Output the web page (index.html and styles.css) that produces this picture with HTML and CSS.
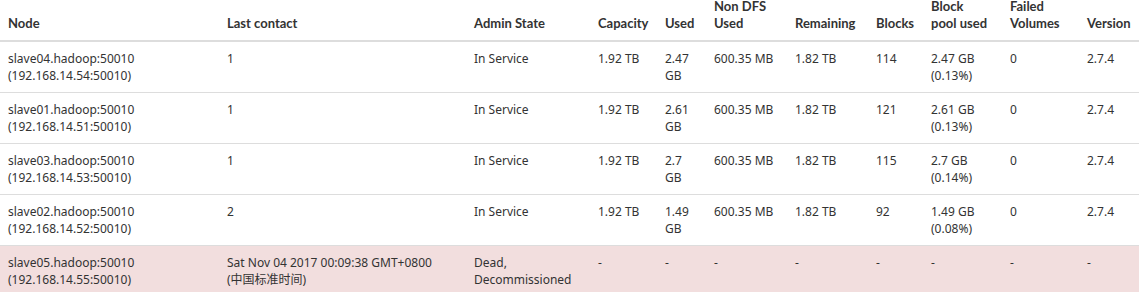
FILE: index.html
```html
<!DOCTYPE html>
<html>
<head>
<meta charset="utf-8">
<link rel="stylesheet" href="styles.css">
</head>
<body>
<table class="dn-table">
  <colgroup>
    <col class="c-node"><col class="c-contact"><col class="c-state"><col class="c-cap"><col class="c-used"><col class="c-nondfs"><col class="c-rem"><col class="c-blocks"><col class="c-pool"><col class="c-failed"><col class="c-ver">
  </colgroup>
  <thead>
    <tr>
      <th>Node</th><th>Last contact</th><th>Admin State</th><th>Capacity</th><th>Used</th><th>Non DFS Used</th><th>Remaining</th><th>Blocks</th><th>Block<br>pool used</th><th>Failed Volumes</th><th>Version</th>
    </tr>
  </thead>
  <tbody>
    <tr>
      <td>slave04.hadoop:50010<br>(192.168.14.54:50010)</td><td>1</td><td>In Service</td><td>1.92 TB</td><td>2.47 GB</td><td>600.35 MB</td><td>1.82 TB</td><td>114</td><td>2.47 GB<br>(0.13%)</td><td>0</td><td>2.7.4</td>
    </tr>
    <tr>
      <td>slave01.hadoop:50010<br>(192.168.14.51:50010)</td><td>1</td><td>In Service</td><td>1.92 TB</td><td>2.61 GB</td><td>600.35 MB</td><td>1.82 TB</td><td>121</td><td>2.61 GB<br>(0.13%)</td><td>0</td><td>2.7.4</td>
    </tr>
    <tr>
      <td>slave03.hadoop:50010<br>(192.168.14.53:50010)</td><td>1</td><td>In Service</td><td>1.92 TB</td><td>2.7 GB</td><td>600.35 MB</td><td>1.82 TB</td><td>115</td><td>2.7 GB<br>(0.14%)</td><td>0</td><td>2.7.4</td>
    </tr>
    <tr>
      <td>slave02.hadoop:50010<br>(192.168.14.52:50010)</td><td>2</td><td>In Service</td><td>1.92 TB</td><td>1.49 GB</td><td>600.35 MB</td><td>1.82 TB</td><td>92</td><td>1.49 GB<br>(0.08%)</td><td>0</td><td>2.7.4</td>
    </tr>
    <tr class="danger">
      <td>slave05.hadoop:50010<br>(192.168.14.55:50010)</td><td>Sat Nov 04 2017 00:09:38 GMT+0800<br>(中国标准时间)</td><td>Dead,<br>Decommissioned</td><td>-</td><td>-</td><td>-</td><td>-</td><td>-</td><td>-</td><td>-</td><td>-</td>
    </tr>
  </tbody>
</table>
</body>
</html>
```
FILE: styles.css
```css
html, body {
  margin: 0;
  padding: 0;
  background: #fff;
}
body {
  font-family: "Noto Sans", "Noto Sans CJK SC", sans-serif;
  font-size: 12px;
  line-height: 17px;
  color: #333;
}
.dn-table {
  width: 1139px;
  table-layout: fixed;
  border-collapse: collapse;
  border-spacing: 0;
  margin-top: -10px;
}
.c-node { width: 219px; }
.c-contact { width: 247px; }
.c-state { width: 124px; }
.c-cap { width: 67px; }
.c-used { width: 49px; }
.c-nondfs { width: 81px; }
.c-rem { width: 81px; }
.c-blocks { width: 55px; }
.c-pool { width: 79px; }
.c-failed { width: 77px; }
.c-ver { width: 60px; }
.dn-table th,
.dn-table td {
  padding: 8px;
  text-align: left;
  vertical-align: top;
}
.dn-table th {
  font-family: Lato, "Noto Sans", sans-serif;
  font-size: 13px;
  font-weight: bold;
  vertical-align: bottom;
  border-bottom: 2px solid #ddd;
}
.dn-table td {
  border-top: 1px solid #ddd;
}
.dn-table tr.danger td {
  background: #f2dede;
}
```
